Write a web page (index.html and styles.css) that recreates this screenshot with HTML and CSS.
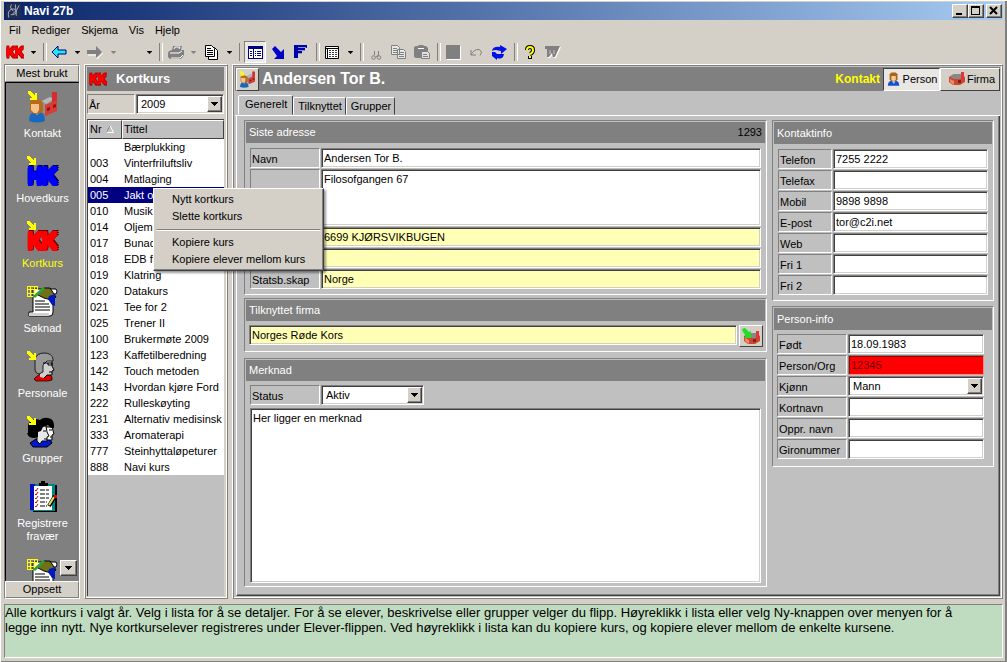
FILE: index.html
```html
<!DOCTYPE html>
<html lang="no">
<head>
<meta charset="utf-8">
<title>Navi 27b</title>
<link rel="stylesheet" href="styles.css">
</head>
<body>
<svg class="defs" aria-hidden="true">
  <symbol id="caret" viewBox="0 0 7 4"><path d="M0 0h7v1h-1v1h-1v1h-1v1h-1v-1h-1v-1h-1v-1h-1z" fill="currentColor"/></symbol>
  <symbol id="hint" viewBox="0 0 9 9"><path d="M0 0h3v1h1v1h1v1h1v1h1v-2h2v7h-7v-2h2v-1h-1v-1h-1v-1h-1v-1h-1z" fill="#ff0"/></symbol>
  <symbol id="man" viewBox="0 0 16 16">
    <path d="M1 15q0-5 4-6h5q4 1 4 6z" fill="#1450c8"/><path d="M5 9l3 4 2-4z" fill="#9cf"/><path d="M3 2l2-2h5l2 2v6l-2 2h-5l-2-2z" fill="#a8641c"/><path d="M5 4h5v4l-2 2h-1l-2-2z" fill="#ffc890"/>
  </symbol>
  <symbol id="plant" viewBox="0 0 16 14">
    <path d="M0 5l5-3h7l4 3v5l-5 3h-7l-4-3z" fill="#c84830"/><path d="M1 5l4-3h7l3 3-4 2h-6z" fill="#888"/><path d="M12 0h3v8l-3 2z" fill="#e03838"/><path d="M1 7l4 2v4l-4-3z" fill="#f08868"/><path d="M9 8h3v3h-3z" fill="#802018"/>
  </symbol>
  <symbol id="contact" viewBox="0 0 32 32">
    <path d="M14 10l8-4 6 3v10l-8 5-6-4z" fill="#909090"/><path d="M15 10l8-4 4 2-8 5z" fill="#b8b8b8"/><path d="M25 1h5v16l-5 3z" fill="#d82c2c"/><path d="M18 14l12-5v11l-12 5z" fill="#d83c34"/><path d="M20 17l3-1v3l-3 1zm6-3l3-1v3l-3 1z" fill="#801818"/>
    <path d="M2 30q0-8 5-9h6q5 1 5 9q-8 3-16 0z" fill="#1868c0"/><path d="M7 20l3 4 3-4z" fill="#c8e8ff"/><path d="M3 11q2-4 7-3q6 1 6 6v6q-2 3-7 3t-6-4z" fill="#b46c18"/><path d="M4 13h8v6l-2 3h-3l-3-3z" fill="#f8c088"/>
    <use href="#hint" x="1" y="0" width="9" height="9"/>
  </symbol>
  <symbol id="application" viewBox="0 0 32 32">
    <path d="M6 3h23q2 2 0 5h-3v18q0 4-3 4h-21v-4h4z" fill="#fff" stroke="#000"/><path d="M2 27h20v3h-20z" fill="#d0d0d0"/><path d="M8 15h10M8 18h14M8 21h15M8 24h15" stroke="#000"/>
    <path d="M11 9l6-7h6l6 9-5 3-7-2z" fill="#707018" stroke="#000"/><path d="M22 10l6-2v12l-3-1-4-6z" fill="#0018c0"/><path d="M7 11l10-9" stroke="#30a030" stroke-width="3"/>
    <path d="M0 .5h10M0 3.500h10M0 7.500h8M0 10.500h6M.5 0v11M3.500 0v11M7.500 0v9M10.500 0v4" stroke="#ff0"/>
  </symbol>
  <symbol id="staff" viewBox="0 0 32 32">
    <path d="M9 26l4-3h9l3 3v3l-4 1h-12l-2-2z" fill="#e00000" stroke="#000" stroke-width=".7"/><path d="M13 24v-7l3-7h9v5l2 4-2 1v4h-5l-3 3-4-1z" fill="#d0d0d0"/><path d="M25 10v5l2 4-2 1v4h-5l-3 3" fill="none" stroke="#000"/>
    <path d="M8 19V8q2-6 9-6q8 0 9 6v2h-6l-4 4v7l-4 2q-3 0-4-4z" fill="#989898" stroke="#202020"/><path d="M16 12h9M21 12v2h4v-2M22 21h3" fill="none" stroke="#000"/>
    <use href="#hint" x="0" y="0" width="9" height="9"/>
  </symbol>
  <symbol id="groups" viewBox="0 0 32 32">
    <path d="M3 27l6-4h14l2 4-5 4h-14z" fill="#0018d0" stroke="#000"/><path d="M18 11h7l2 7-2 1v5h-7z" fill="#f8f8f8" stroke="#000"/><path d="M10 25V14l5-4h4l1 6 2 4-2 1v4h-5l-2 3z" fill="#e8e8e8" stroke="#000"/>
    <path d="M1 17V9q2-6 8-6l4 1q3-3 8-2q6 1 6 7v3h-3l-3-3-5 2-2 4-3 1v5q-9 3-11-4z" fill="#000"/><path d="M16 15h3M22 14h3M17 23h3M23 21h2" stroke="#000"/>
    <use href="#hint" x="0" y="0" width="9" height="9"/>
  </symbol>
  <symbol id="absence" viewBox="0 0 32 32">
    <path d="M6 4h24v27h-24z" fill="#000"/><path d="M4 3h24v27h-24z" fill="#008888"/><path d="M3 3h5v26h-5z" fill="#0010c0"/><path d="M7 5h18v24h-18z" fill="#fff"/>
    <path d="M12 5v-3h2v-2h4v2h3v3z" fill="#000"/><path d="M13 9h9M13 13h9M13 17h9M13 21h7M13 25h7" stroke="#000" stroke-dasharray="5 1"/><path d="M8 9l1 1 2-3M8 13l1 1 2-3M8 17l1 1 2-3M8 21l1 1 2-3M8 25l1 1 2-3" fill="none" stroke="#d00000"/><path d="M22 25l6-10" stroke="#000" stroke-width="4"/><path d="M22 24l5-8" stroke="#e8e060" stroke-width="2"/><path d="M27 14h3v3h-3z" fill="#e00"/>
  </symbol>
</svg>

<header class="titlebar">
  <svg class="app-icon" viewBox="0 0 16 16"><path d="M0 0h16v16h-16z" fill="#202c50"/><path d="M3 15q-2-7 3-9q5-1 5 3q0 3-6 3M6 1q-3 4 2 7M14 2q-2 6-7 9M10 1l1 12" fill="none" stroke="#b0b8c8"/></svg>
  <h1 class="window-title">Navi 27b</h1>
  <button class="win-btn" aria-label="Minimer"><svg viewBox="0 0 12 10"><path d="M2 7h6v2h-6z"/></svg></button>
  <button class="win-btn" aria-label="Maksimer"><svg viewBox="0 0 12 10"><path d="M1 0h9v9h-9zM2 2v6h7v-6z" fill-rule="evenodd"/></svg></button>
  <button class="win-btn win-close" aria-label="Lukk"><svg viewBox="0 0 12 10"><path d="M2 1l7 7M9 1l-7 7" stroke="#000" stroke-width="2"/></svg></button>
</header>

<nav class="menubar" aria-label="Meny">
  <button>Fil</button><button>Rediger</button><button>Skjema</button><button>Vis</button><button>Hjelp</button>
</nav>

<div class="toolbar" role="toolbar" aria-label="Verktøy">
  <button class="tool tight" aria-label="Kortkurs"><svg class="mark" width="18" height="14" viewBox="0 0 18 14"><text x="9" y="12">KK</text></svg></button>
  <button class="drop" aria-label="Velg"><svg width="5" height="3"><use href="#caret"/></svg></button>
  <span class="sep"></span>
  <button class="tool tight" aria-label="Tilbake"><svg width="16" height="14" viewBox="0 0 16 14"><path d="M1 7l6-6v4h8v4h-8v4z" fill="#20e8f0" stroke="#000080"/></svg></button>
  <button class="drop" aria-label="Tilbake til"><svg width="5" height="3"><use href="#caret"/></svg></button>
  <button class="tool tight" aria-label="Frem"><svg width="16" height="14" viewBox="0 0 16 14"><path d="M16 8l-6 6v-4h-9" fill="none" stroke="#fff"/><path d="M15 7l-6-6v4h-9v4h9v4z" fill="#808080"/></svg></button>
  <button class="drop off" aria-label="Frem til"><svg width="5" height="3"><use href="#caret"/></svg></button>
  <span class="blank"></span>
  <button class="drop" aria-label="Siste"><svg width="5" height="3"><use href="#caret"/></svg></button>
  <span class="sep"></span>
  <button class="tool tight" aria-label="Skriv ut"><svg width="17" height="15" viewBox="0 0 17 15"><path d="M2 6l3-1 1-4h9l-1 4h3v5l-3 4h-11l-2-2v-4z" fill="#808080"/><path d="M7 4l1-2h5l-1 2M3 8h9l3-2M4 13h9l3-3" fill="none" stroke="#fff"/></svg></button>
  <button class="drop off" aria-label="Skriv ut valg"><svg width="5" height="3"><use href="#caret"/></svg></button>
  <button class="tool tight" aria-label="Rapporter"><svg width="13" height="15" viewBox="0 0 13 15"><path d="M3.500 2.500h6l3 3v9h-9z" fill="#fff" stroke="#000"/><path d="M.5.5h6l3 3v8h-9z" fill="#fff" stroke="#000"/><path d="M2 3.500h4M2 5.500h6M2 7.500h6M2 9.500h6" stroke="#000"/></svg></button>
  <button class="drop" aria-label="Rapportvalg"><svg width="5" height="3"><use href="#caret"/></svg></button>
  <span class="sep double"></span>
  <button class="tool pressed" aria-label="Detaljer"><svg width="15" height="13" viewBox="0 0 15 13"><path d="M0 0h15v13h-15z" fill="#000080"/><path d="M1 3h4v9h-4zM6 3h8v9h-8z" fill="#fff"/><path d="M2 5.500h2M2 7.500h2M2 9.500h2M7 5.500h1M9 5.500h4M7 7.500h1M9 7.500h4M7 9.500h1M9 9.500h4" stroke="#000080"/></svg></button>
  <button class="tool" aria-label="Gå til"><svg width="13" height="13" viewBox="0 0 13 13"><path d="M0 3l3-3 6 6 3-3v10h-10l3-3z" fill="#0000c8"/></svg></button>
  <button class="tool" aria-label="Sorter"><svg width="14" height="14" viewBox="0 0 14 14"><path d="M0 0h13v3h-2v3h-3v3h-4v4h-4z" fill="#0000a8"/><path d="M4 2.500h8M4 5.500h7M4 8.500h4" stroke="#8890d8"/></svg></button>
  <span class="sep"></span>
  <button class="tool tight" aria-label="Tabell"><svg width="14" height="13" viewBox="0 0 14 13"><path d="M.5.5h13v12h-13z" fill="#fff" stroke="#000"/><path d="M1 2.500h12M2.500 3v9" stroke="#000"/><path d="M4 4.500h9M4 6.500h9M4 8.500h9M4 10.500h9" stroke="#404040" stroke-dasharray="2 1"/></svg></button>
  <button class="drop" aria-label="Tabellvalg"><svg width="5" height="3"><use href="#caret"/></svg></button>
  <span class="sep"></span>
  <button class="tool" aria-label="Klipp ut"><svg class="low" width="11" height="9" viewBox="0 0 11 9"><path d="M3.500 0v4M7.500 0v4l-3 2" fill="none" stroke="#808080"/><circle cx="2.500" cy="6.500" r="1.800" fill="none" stroke="#808080"/><circle cx="8" cy="6.500" r="1.800" fill="none" stroke="#808080"/></svg></button>
  <button class="tool" aria-label="Kopier"><svg width="16" height="14" viewBox="0 0 16 14"><path d="M.5.5h6l2 2v7h-8zM6.500 4.500h6l2 2v7h-8z" fill="#e8e8e8" stroke="#808080"/><path d="M2 3.500h4M2 5.500h4M2 7.500h4M8 7.500h5M8 9.500h5M8 11.500h5" stroke="#808080"/></svg></button>
  <button class="tool" aria-label="Lim inn"><svg width="17" height="15" viewBox="0 0 17 15"><path d="M0 2l2-1h2l1-1h4l1 1h2l2 2v10h-12l-2-1z" fill="#808080"/><path d="M4 3.500h6" stroke="#fff"/><path d="M7.500 6.500h6l2 2v5h-8z" fill="#e0e0e0" stroke="#808080"/><path d="M9 9.500h4M9 11.500h5" stroke="#808080"/></svg></button>
  <span class="sep"></span>
  <button class="tool" aria-label="Lagre"><svg width="15" height="15" viewBox="0 0 15 15"><path d="M1 1h14v14h-14z" fill="#fff"/><path d="M0 0h14v14h-14z" fill="#808080"/></svg></button>
  <button class="tool" aria-label="Angre"><svg width="13" height="9" viewBox="0 0 13 9"><path d="M1 2v5h5M1 7q3-6 8-5.500q4 2 1 6" fill="none" stroke="#808080"/></svg></button>
  <button class="tool" aria-label="Oppdater"><svg width="16" height="15" viewBox="0 0 16 15"><path d="M1 6q1-5 8-4v-2l7 4-6 5v-3l-5-1q-3 0-4 1z" fill="#0010e8"/><path d="M13 9q-1 6-7 4v2l-5-4v-4h3l2 2z" fill="#0010e8"/></svg></button>
  <span class="sep"></span>
  <button class="tool" aria-label="Hjelp"><svg width="11" height="15" viewBox="0 0 11 15"><path d="M2 5q0-3 3-3t3 3-3 4M5 11v3" fill="none" stroke="#000" stroke-width="4"/><path d="M2 5q0-3 3-3t3 3-3 4M5 11v2" fill="none" stroke="#ff0" stroke-width="2"/></svg></button>
  <button class="tool" aria-label="Word"><svg width="17" height="14" viewBox="0 0 17 14"><path d="M1 2h15l-5 11h-2l-1-4-3 4h-2v-8z" fill="#fff"/><path d="M0 1h15l-5 11h-2l-1-4-3 4h-2v-8h-2z" fill="#808080"/><path d="M5 5v4M9 5v4" stroke="#c8c4bc"/></svg></button>
</div>

<main class="workspace">
  <nav class="sidebar" aria-label="Moduler">
    <button class="side-head">Mest brukt</button>
    <div class="side-body">
      <button class="module"><svg><use href="#contact"/></svg>Kontakt</button>
      <button class="module"><svg class="mark big blue" viewBox="0 0 32 32"><text x="15" y="29">HK</text><use href="#hint" width="9" height="9"/></svg>Hovedkurs</button>
      <button class="module current"><svg class="mark big" viewBox="0 0 32 32"><text x="15" y="29">KK</text><use href="#hint" width="9" height="9"/></svg>Kortkurs</button>
      <button class="module"><svg><use href="#application"/></svg>Søknad</button>
      <button class="module"><svg><use href="#staff"/></svg>Personale</button>
      <button class="module"><svg><use href="#groups"/></svg>Grupper</button>
      <button class="module"><svg><use href="#absence"/></svg>Registrere fravær</button>
      <button class="module" aria-label="Søknad"><svg><use href="#application"/></svg></button>
      <button class="side-scroll" aria-label="Rull ned"><svg width="7" height="4"><use href="#caret"/></svg></button>
    </div>
    <button class="side-head">Oppsett</button>
  </nav>

  <section class="courses">
    <div class="panel-head"><svg class="mark" width="18" height="14" viewBox="0 0 18 14"><text x="9" y="12">KK</text></svg><h2 class="course-title">Kortkurs</h2></div>
    <div class="field year"><label for="year">År</label><span class="combo"><select id="year"><option>2009</option></select><span class="arrow"><svg width="7" height="4"><use href="#caret"/></svg></span></span></div>
    <div class="list">
      <table class="course-table">
        <thead><tr><th class="nr">Nr <svg width="8" height="8" viewBox="0 0 8 8"><path d="M.5 7.500l3.500-7 3.500 7z" fill="none" stroke="#fff"/><path d="M.5 7.500l3.500-7" stroke="#808080"/></svg></th><th>Tittel</th></tr></thead>
        <tbody>
          <tr><td></td><td>Bærplukking</td></tr>
          <tr><td>003</td><td>Vinterfriluftsliv</td></tr>
          <tr><td>004</td><td>Matlaging</td></tr>
          <tr class="selected"><td>005</td><td>Jakt o</td></tr>
          <tr><td>010</td><td>Musik</td></tr>
          <tr><td>014</td><td>Oljema</td></tr>
          <tr><td>017</td><td>Bunad</td></tr>
          <tr><td>018</td><td>EDB f</td></tr>
          <tr><td>019</td><td>Klatring</td></tr>
          <tr><td>020</td><td>Datakurs</td></tr>
          <tr><td>021</td><td>Tee for 2</td></tr>
          <tr><td>025</td><td>Trener II</td></tr>
          <tr><td>100</td><td>Brukermøte 2009</td></tr>
          <tr><td>123</td><td>Kaffetilberedning</td></tr>
          <tr><td>142</td><td>Touch metoden</td></tr>
          <tr><td>143</td><td>Hvordan kjøre Ford</td></tr>
          <tr><td>222</td><td>Rulleskøyting</td></tr>
          <tr><td>231</td><td>Alternativ medisinsk b</td></tr>
          <tr><td>333</td><td>Aromaterapi</td></tr>
          <tr><td>777</td><td>Steinhyttaløpeturer</td></tr>
          <tr><td>888</td><td>Navi kurs</td></tr>
        </tbody>
      </table>
    </div>
  </section>

  <section class="detail">
    <div class="panel-head">
      <button class="head-icon" aria-label="Kontakt"><svg width="17" height="17"><use href="#contact"/></svg></button>
      <h2 class="person-name">Andersen Tor B.</h2>
      <span class="kind">Kontakt</span>
      <button class="kind-btn chosen"><svg width="14" height="15"><use href="#man"/></svg>Person</button>
      <button class="kind-btn"><svg width="16" height="14"><use href="#plant"/></svg>Firma</button>
    </div>
    <div class="tabs" role="tablist">
      <button class="tab active" role="tab">Generelt</button><button class="tab" role="tab">Tilknyttet</button><button class="tab" role="tab">Grupper</button>
    </div>
    <div class="page">
      <div class="column wide">
        <section class="group">
          <h3 class="group-head">Siste adresse<span class="ident">1293</span></h3>
          <div class="fields address">
            <div class="field"><label for="name">Navn</label><input id="name" value="Andersen Tor B."></div>
            <div class="field tall"><label for="street"></label><textarea id="street" aria-label="Adresse">Filosofgangen 67</textarea></div>
            <div class="field"><label for="post"></label><input id="post" class="lookup" aria-label="Poststed" value="6699 KJØRSVIKBUGEN"></div>
            <div class="field"><label for="region"></label><input id="region" class="lookup" aria-label="Kommune"></div>
            <div class="field"><label for="country">Statsb.skap</label><input id="country" class="lookup" value="Norge"></div>
          </div>
        </section>
        <section class="group">
          <h3 class="group-head">Tilknyttet firma</h3>
          <div class="fields company">
            <input class="lookup" aria-label="Tilknyttet firma" value="Norges Røde Kors">
            <button class="pick" aria-label="Åpne firma"><svg width="18" height="17" viewBox="0 0 18 17"><use href="#plant" x="2" y="3" width="16" height="14"/><path d="M0 1l3-1 4 4 2-1v7h-7l2-2-3-4z" fill="#20e020"/></svg></button>
          </div>
        </section>
        <section class="group note">
          <h3 class="group-head">Merknad</h3>
          <div class="fields note-fields">
            <div class="field status"><label for="status">Status</label><span class="combo"><select id="status"><option>Aktiv</option></select><span class="arrow"><svg width="7" height="4"><use href="#caret"/></svg></span></span></div>
            <textarea class="note-text" aria-label="Merknad">Her ligger en merknad</textarea>
          </div>
        </section>
      </div>
      <div class="column narrow">
        <section class="group">
          <h3 class="group-head">Kontaktinfo</h3>
          <div class="fields contact">
            <div class="field"><label for="phone">Telefon</label><input id="phone" value="7255 2222"></div>
            <div class="field"><label for="fax">Telefax</label><input id="fax"></div>
            <div class="field"><label for="mobile">Mobil</label><input id="mobile" value="9898 9898"></div>
            <div class="field"><label for="mail">E-post</label><input id="mail" value="tor@c2i.net"></div>
            <div class="field"><label for="web">Web</label><input id="web"></div>
            <div class="field"><label for="free1">Fri 1</label><input id="free1"></div>
            <div class="field"><label for="free2">Fri 2</label><input id="free2"></div>
          </div>
        </section>
        <section class="group">
          <h3 class="group-head">Person-info</h3>
          <div class="fields person">
            <div class="field"><label for="born">Født</label><input id="born" value="18.09.1983"></div>
            <div class="field"><label for="pid">Person/Org</label><input id="pid" class="invalid" value="12345"></div>
            <div class="field"><label for="sex">Kjønn</label><span class="combo"><select id="sex"><option>Mann</option></select><span class="arrow"><svg width="7" height="4"><use href="#caret"/></svg></span></span></div>
            <div class="field"><label for="short">Kortnavn</label><input id="short"></div>
            <div class="field"><label for="orig">Oppr. navn</label><input id="orig"></div>
            <div class="field"><label for="giro">Gironummer</label><input id="giro"></div>
          </div>
        </section>
      </div>
    </div>
  </section>
</main>

<footer class="hint">Alle kortkurs i valgt år. Velg i lista for å se detaljer. For å se elever, beskrivelse eller grupper velger du flipp. Høyreklikk i lista eller velg Ny-knappen over menyen for å legge inn nytt. Nye kortkurselever registreres under Elever-flippen. Ved høyreklikk i lista kan du kopiere kurs, og kopiere elever mellom de enkelte kursene.</footer>

<div class="context-menu" role="menu">
  <button role="menuitem">Nytt kortkurs</button>
  <button role="menuitem">Slette kortkurs</button>
  <hr>
  <button role="menuitem">Kopiere kurs</button>
  <button role="menuitem">Kopiere elever mellom kurs</button>
</div>
</body>
</html>
```
FILE: styles.css
```css
:root {
  --face: #d4d0c8;
  --silver: #c0c0c0;
  --shade: #808080;
  --dark: #404040;
  --yellow: #ffffb5;
}

* { box-sizing: border-box; }

body {
  margin: 0;
  min-height: 100vh;
  display: flex;
  flex-direction: column;
  padding: 2px 4px 4px;
  background: var(--face);
  box-shadow: inset 1px 1px #fff, inset -2px -1px var(--shade);
  color: #000;
  font: 11px/13px "Liberation Sans", Arial, sans-serif;
}

button, input, textarea, select {
  margin: 0;
  padding: 0;
  border: 0;
  border-radius: 0;
  background: none;
  color: inherit;
  font: inherit;
}

h1, h2, h3 { margin: 0; font: inherit; }
svg { display: block; flex: none; }
.defs { position: absolute; width: 0; height: 0; }

/* Lettered course marks */
.mark text {
  fill: #f00;
  stroke: #f00;
  stroke-width: 1px;
  font: bold 12px "Liberation Sans", Arial, sans-serif;
  text-anchor: middle;
  filter: drop-shadow(0 -2px #d00000) drop-shadow(0 1px #800000);
}
.big text {
  stroke-width: 2px;
  font-size: 20px;
  filter: drop-shadow(0 -2px #f00) drop-shadow(0 -2px #f00) drop-shadow(1px -1px #600000);
}
.blue text {
  fill: #00f;
  stroke: #00f;
  filter: drop-shadow(0 -2px #00f) drop-shadow(0 -2px #00f) drop-shadow(1px -1px #000050);
}

/* Title bar and menus */
.titlebar {
  display: flex;
  align-items: center;
  height: 18px;
  padding: 0 1px 0 2px;
  background: linear-gradient(90deg, #0a246a, #a6caf0);
}
.app-icon { width: 15px; height: 16px; }
.window-title { flex: 1; margin-left: 3px; color: #fff; font: bold 12px/16px "Liberation Sans", Arial, sans-serif; }
.win-btn {
  width: 16px;
  height: 14px;
  padding: 1px;
  background: var(--face);
  border: 1px solid;
  border-color: #fff var(--dark) var(--dark) #fff;
  box-shadow: inset -1px -1px var(--shade);
}
.win-close { margin-left: 2px; }

.menubar { display: flex; height: 20px; }
.menubar button { padding: 0 6px 0 5px; }

.toolbar { display: flex; align-items: center; height: 24px; }
.tool, .drop { display: flex; align-items: center; justify-content: center; height: 22px; }
.tool { width: 22px; margin-right: 1px; }
.tight { margin-right: 0; }
.drop { width: 14px; }
.off { color: var(--shade); }
.blank { width: 22px; }
.sep { width: 8px; height: 18px; padding-left: 3px; }
.sep::before { content: ""; display: block; width: 2px; height: 18px; border-left: 1px solid var(--shade); border-right: 1px solid #fff; }
.double::before { width: 4px; }
.low { margin-top: 6px; }
.pressed { background: #ebe9e4; border: 1px solid; border-color: var(--shade) #fff #fff var(--shade); }

/* Workspace */
.workspace { flex: 1; display: flex; gap: 4px; min-height: 0; }
.sidebar { width: 76px; display: flex; flex-direction: column; border: 1px solid; border-color: var(--shade) #fff #fff var(--shade); }
.side-head { height: 17px; background: var(--face); border: 1px solid; border-color: #fff var(--shade) var(--shade) #fff; }
.side-body {
  position: relative;
  flex: 1 1 0;
  min-height: 0;
  overflow: hidden;
  display: flex;
  flex-direction: column;
  gap: 16px;
  padding-top: 8px;
  background: var(--shade);
  border-top: 1px solid #000;
  border-left: 1px solid #000;
  color: #fff;
}
.module { display: flex; flex: none; flex-direction: column; align-items: center; gap: 4px; padding: 0 10px; }
.module svg { width: 32px; height: 32px; }
.current { color: #ff0; }
.side-scroll {
  position: absolute;
  right: 2px;
  bottom: 5px;
  display: grid;
  place-items: center;
  width: 17px;
  height: 16px;
  background: var(--face);
  border: 1px solid;
  border-color: #fff var(--dark) var(--dark) #fff;
  box-shadow: inset -1px -1px var(--shade);
  color: #000;
}

.courses, .detail {
  display: flex;
  flex-direction: column;
  border: 1px solid;
  border-color: #fff var(--shade) var(--shade) #fff;
  box-shadow: inset 1px 1px var(--shade), inset -1px -1px #fff;
  padding: 2px;
}
.courses { width: 144px; padding: 2px 3px 2px 2px; }
.detail { flex: 1; min-width: 0; background: var(--silver); }
.panel-head { display: flex; flex: none; align-items: center; height: 24px; background: var(--shade); color: #fff; }
.courses .panel-head { padding-left: 2px; }
.course-title { margin-left: 9px; font: bold 13px/16px "Liberation Sans", Arial, sans-serif; }

.list {
  flex: 1;
  overflow: hidden;
  margin-top: 5px;
  background: var(--silver);
  border-left: 1px solid var(--dark);
  border-top: 1px solid var(--dark);
}
.course-table { width: 100%; table-layout: fixed; border-collapse: separate; border-spacing: 0; background: #fff; }
.course-table th {
  height: 19px;
  padding: 0 1px;
  background: var(--silver);
  border: 1px solid;
  border-color: #fff var(--dark) var(--dark) #fff;
  text-align: left;
  font-weight: normal;
}
.course-table .nr { width: 34px; }
.nr svg { display: inline-block; margin-left: 1px; }
.course-table td { height: 16px; padding: 0 0 0 2px; overflow: hidden; white-space: nowrap; }
.selected td { background: #000080; color: #fff; }

/* Labelled fields */
.field { display: grid; grid-template-columns: 70px 1fr; gap: 1px; height: 20px; }
.field label {
  display: flex;
  align-items: center;
  padding: 2px 0 0 1px;
  border: 1px solid;
  border-color: var(--shade) #fff #fff var(--shade);
}
input, textarea, select {
  width: 100%;
  min-width: 0;
  height: 100%;
  padding: 0 2px 1px;
  background: #fff;
  border: 1px solid;
  border-color: var(--shade) #fff #fff var(--shade);
  box-shadow: inset 1px 1px var(--dark), inset -1px -1px var(--face);
}
textarea { display: block; padding: 3px 2px; resize: none; overflow: hidden; }
select { appearance: none; padding: 0 4px; }
.combo { position: relative; display: block; }
.arrow {
  position: absolute;
  top: 2px;
  right: 2px;
  bottom: 2px;
  width: 15px;
  display: grid;
  place-items: center;
  background: var(--face);
  border: 1px solid;
  border-color: #fff var(--dark) var(--dark) #fff;
  box-shadow: inset -1px -1px var(--shade);
  pointer-events: none;
}
.year { grid-template-columns: 48px 1fr; margin-top: 3px; }
.lookup { background: var(--yellow); }
.invalid { background: #f00; color: #600; box-shadow: inset 1px 1px #900; border-color: var(--shade) #f88 #f88 var(--shade); }

/* Detail header and tabs */
.head-icon {
  display: grid;
  place-items: center;
  width: 23px;
  height: 23px;
  margin-left: 1px;
  background: var(--face);
  border: 1px solid;
  border-color: #fff var(--dark) var(--dark) #fff;
}
.person-name { flex: 1; margin-left: 3px; font: bold 16px/20px "Liberation Sans", Arial, sans-serif; }
.kind { margin-right: 3px; color: #ff0; font-weight: bold; font-size: 12px; }
.kind-btn {
  display: flex;
  align-items: center;
  justify-content: center;
  gap: 2px;
  width: 60px;
  height: 23px;
  padding-left: 4px;
  background: var(--face);
  border: 1px solid;
  border-color: #fff var(--dark) var(--dark) #fff;
  color: #000;
}
.chosen { width: 57px; padding-left: 1px; background: #e9e7e3; border-color: var(--dark) #fff #fff var(--dark); }

.tabs { display: flex; flex: none; align-items: flex-end; height: 25px; padding-left: 3px; border-bottom: 1px solid #fff; }
.tab {
  height: 18px;
  padding: 1px 3px 0 4px;
  background: var(--silver);
  border: 1px solid;
  border-color: #fff var(--dark) transparent #fff;
  border-radius: 2px 2px 0 0;
}
.active { height: 20px; padding: 0 5px 1px 6px; }
.page {
  flex: 1;
  display: flex;
  gap: 5px;
  margin-left: 1px;
  padding: 4px 5px 8px 7px;
  border: 1px solid;
  border-color: transparent var(--dark) var(--dark) #fff;
  border-top: 0;
  box-shadow: inset -1px -1px var(--shade);
}
.column { display: flex; flex-direction: column; }
.wide { flex: 1; min-width: 0; gap: 3px; }
.narrow { width: 222px; gap: 5px; }

.group { padding: 1px 1px 0; border: 1px solid; border-color: var(--shade) #fff #fff var(--shade); }
.group-head { display: flex; justify-content: space-between; height: 21px; padding: 4px 3px; background: var(--shade); color: #fff; }
.narrow .group-head { height: 22px; padding-top: 5px; }
.ident { color: #000; }
.fields { display: flex; flex-direction: column; gap: 1px; padding: 5px 4px; }
.tall { height: 57px; }
.company { flex-direction: row; gap: 2px; padding: 4px 2px 6px 3px; }
.company .lookup { height: 20px; }
.pick {
  display: grid;
  flex: none;
  place-items: center;
  width: 24px;
  height: 22px;
  margin-bottom: -2px;
  background: var(--face);
  border: 1px solid;
  border-color: #fff var(--dark) var(--dark) #fff;
}
.note { flex: 1; display: flex; flex-direction: column; margin-top: 3px; }
.note-fields { flex: 1; gap: 3px; padding-top: 4px; padding-bottom: 3px; }
.status { width: 174px; }
.note-text { flex: 1; }
.contact .field { grid-template-columns: 54px 1fr; }
.person { padding: 4px 8px 7px 3px; }

/* Help text */
.hint {
  min-height: 54px;
  margin-top: 5px;
  padding-right: 20px;
  background: #c0dcc0;
  border: 1px solid;
  border-color: var(--shade) #fff #fff var(--shade);
  font-size: 13px;
  line-height: 15px;
}

/* Context menu */
.context-menu {
  position: absolute;
  top: 188px;
  left: 153px;
  display: flex;
  flex-direction: column;
  width: 171px;
  padding: 2px;
  background: var(--face);
  border: 1px solid;
  border-color: #fff var(--dark) var(--dark) #fff;
  box-shadow: inset -1px -1px var(--shade), 2px 2px 2px rgba(0, 0, 0, .4);
}
.context-menu button { height: 17px; padding-left: 16px; text-align: left; }
.context-menu hr { width: 100%; margin: 4px 0 3px; border: 1px solid; border-color: var(--shade) transparent #fff; }
```
